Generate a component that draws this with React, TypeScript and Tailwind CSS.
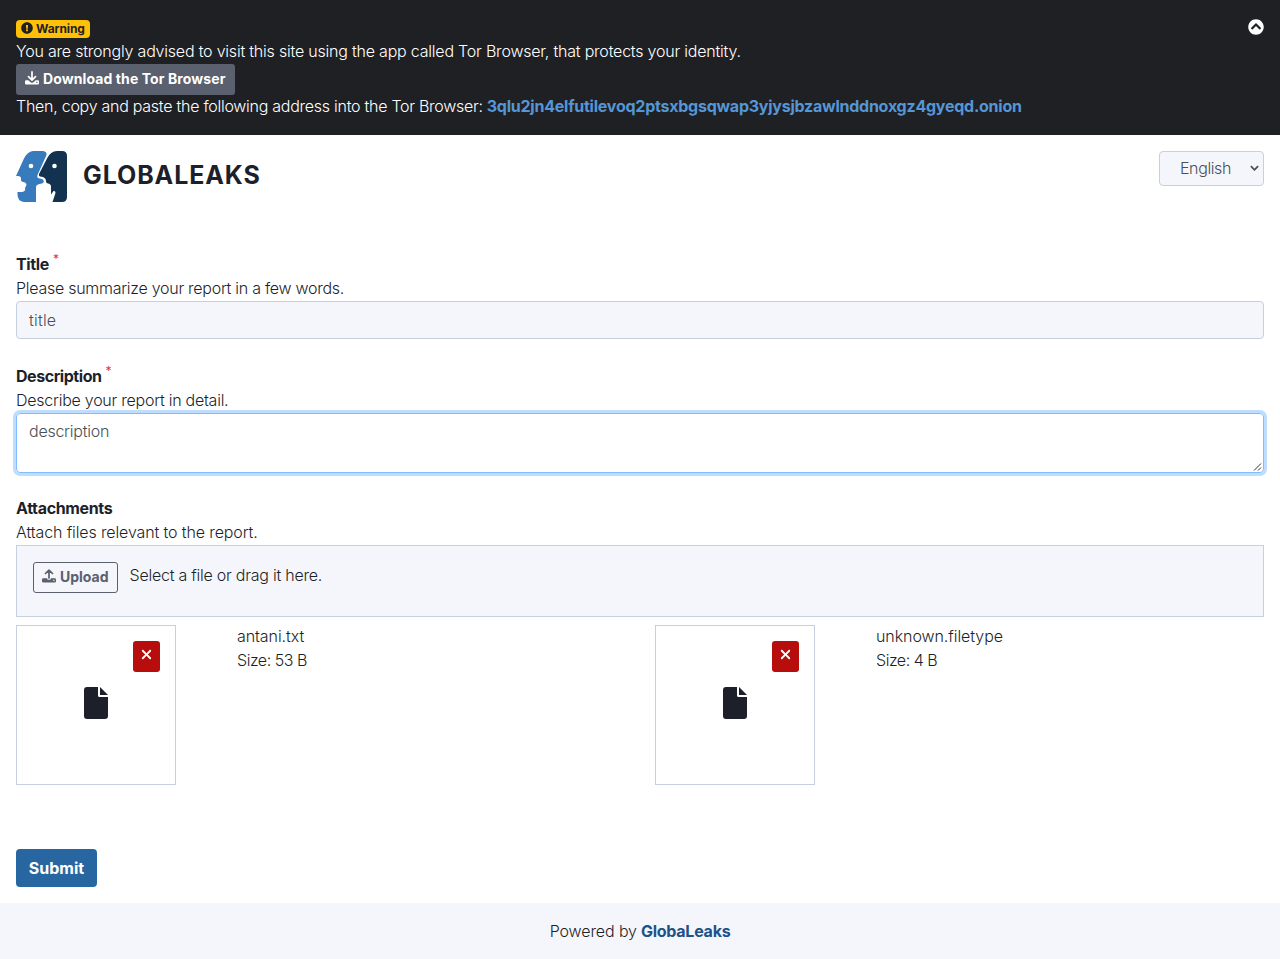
import type { ReactNode } from "react";
import { FaExclamationCircle, FaChevronCircleUp } from "react-icons/fa";
import { FaXmark } from "react-icons/fa6";

function Logo() {
  return (
    <svg viewBox="0 0 51 51" className="size-[51px]" aria-hidden="true">
      <path
        fill="#377bbc"
        d="M17 0H27Q31 0.500 30.500 4L21.500 24Q20.500 27.500 24 27.500L27 28.500L28 31L26 32.500Q20 33 20 36V51H8Q1.500 50.500 1.500 43V41H6Q10 40.500 9 37L10.500 34Q10 31 7 31Q4.500 30.500 5 27.500Q5 25 2 25H0L7.500 8.500Q11 0.500 17 0Z"
      />
      <path
        fill="#12324f"
        d="M41 0H46Q51 0 51 5V46Q51 51 46 51H36.500L39.500 42Q39.500 39.500 37.500 40L35 43.500V35Q34.500 32.500 30.500 32L29.500 28Q28 25.500 24 25.500Q22.500 25 23 23L31 7.500Q34.500 0 41 0Z"
      />
      <circle cx="15" cy="15" r="2.300" fill="#fff" />
      <circle cx="38.500" cy="15" r="2.300" fill="#fff" />
    </svg>
  );
}

function TrayIcon({ up }: { up?: boolean }) {
  return (
    <svg viewBox="0 0 14 14" className="size-[14px]" fill="none" aria-hidden="true">
      <path
        fill="currentColor"
        fillRule="evenodd"
        d={
          up
            ? "M1.300 9.200H5.200V9.700Q5.200 10.700 6.200 10.700H7.800Q8.800 10.700 8.800 9.700V9.200H12.700Q14 9.200 14 10.500V12.200Q14 13.500 12.700 13.500H1.300Q0 13.500 0 12.200V10.500Q0 9.200 1.300 9.200ZM11.300 10.700V12H12.500V10.700Z"
            : "M1.300 9.200H3.200L5.600 11.200Q7 12.200 8.400 11.200L10.800 9.200H12.700Q14 9.200 14 10.500V12.200Q14 13.500 12.700 13.500H1.300Q0 13.500 0 12.200V10.500Q0 9.200 1.300 9.200ZM11.300 10.700V12H12.500V10.700Z"
        }
      />
      <path
        stroke="currentColor"
        strokeWidth="1.700"
        strokeLinecap="round"
        strokeLinejoin="round"
        d={up ? "M7 9V1.200M3.500 4.500L7 1.100L10.500 4.500" : "M7 0.900V9M3.500 5.700L7 9.100L10.500 5.700"}
      />
    </svg>
  );
}

function FileIcon() {
  return (
    <svg viewBox="0 0 24 32" className="h-8 w-6" fill="currentColor" aria-hidden="true">
      <path d="M3 0H14V8.500Q14 10 15.500 10H24V29Q24 32 21 32H3Q0 32 0 29V3Q0 0 3 0ZM16 0L24 8H16Z" />
    </svg>
  );
}

function Field({ label, labelClass, hint, hintClass, required, children }: { label: string; labelClass: string; hint: string; hintClass: string; required?: boolean; children: ReactNode }) {
  return (
    <div>
      <div className="flex h-[25px] items-start font-bold leading-6">
        <span className={labelClass}>{label}</span>
        {required && <span className="ml-[4px] mt-[-5px] text-[12px] font-normal text-[#d9363e]">*</span>}
      </div>
      <div className="h-6 leading-[23px]"><span className={hintClass}>{hint}</span></div>
      {children}
    </div>
  );
}

const files = [
  { name: "antani.txt", size: "53 B" },
  { name: "unknown.filetype", size: "4 B" },
];

export default function App() {
  return (
    <div className="flex h-[959px] flex-col bg-white font-['Inter',sans-serif] text-[16px] font-light leading-6 text-[#1d1f2a]">
      <header className="flex h-[135px] items-start justify-between bg-[#1f2024] px-4 pt-4 text-white">
        <div className="flex flex-col items-start">
          <span className="mt-1 flex h-[18px] items-center gap-[3px] rounded bg-[#ffc107] px-[5px] text-[12px] font-bold text-[#1f2024]">
            <FaExclamationCircle className="mt-[-2px] size-3" />
            <span className="tracking-[-0.1px]">Warning</span>
          </span>
          <p className="mt-px h-[25px]"><span className="tracking-[-0.21px]">You are strongly advised to visit this site using the app called Tor Browser, that protects your identity.</span></p>
          <button className="flex h-[31px] items-start gap-1 rounded-[3px] bg-[#5a606d] px-[9px] pt-[3px] text-[14px] font-bold">
            <span className="mt-1"><TrayIcon /></span>
            <span className="tracking-[0.1px]">Download the Tor Browser</span>
          </button>
          <p className="mt-[-1px] flex gap-1">
            <span className="tracking-[-0.265px]">Then, copy and paste the following address into the Tor Browser:</span>
            <span className="font-bold tracking-[-0.24px] text-[#5596d6]">3qlu2jn4elfutilevoq2ptsxbgsqwap3yjysjbzawlnddnoxgz4gyeqd.onion</span>
          </p>
        </div>
        <FaChevronCircleUp className="mt-[3px] size-4" />
      </header>

      <main className="flex flex-1 flex-col px-4 pt-4">
        <div className="flex h-[51px] items-start justify-between">
          <div className="flex h-[51px] items-center gap-4">
            <Logo />
            <h1 className="mt-[-3px] text-[25px] font-bold"><span className="tracking-[0.9px]">GLOBALEAKS</span></h1>
          </div>
          <div className="flex h-[35px] w-[105px] items-center justify-between rounded-[4px] border border-[#c5d0e0] bg-[#f5f6fb] pl-5 pr-1 text-[#495057]">
            <span className="mt-[-2px] tracking-[-0.4px]">English</span>
            <svg viewBox="0 0 10 6" className="mt-[-1px] h-[6px] w-[9px]" fill="none" stroke="currentColor" strokeWidth="2">
              <path d="M1 1L5 5L9 1" />
            </svg>
          </div>
        </div>

        <div className="mt-[50px]">
          <Field label="Title" labelClass="tracking-[-0.35px]" hint="Please summarize your report in a few words." hintClass="tracking-[-0.27px]" required>
            <div className="flex h-[38px] items-center rounded-[4px] border border-[#c5d0e0] bg-[#f5f6fb] px-3 pb-px text-[#495057]"><span className="tracking-[0.2px]">title</span></div>
          </Field>
        </div>
        <div className="mt-[25px]">
          <Field label="Description" labelClass="tracking-[-0.45px]" hint="Describe your report in detail." hintClass="tracking-[-0.25px]" required>
            <div className="flex h-[60px] items-end justify-between rounded-[4px] border border-[#80bdff] pl-3 text-[#495057] shadow-[0_0_0_3px_#bfdeff]">
              <span className="self-start pt-[5px] tracking-[-0.25px]">description</span>
              <svg viewBox="0 0 10 10" className="size-[10px]" stroke="#333" strokeWidth="1">
                <path d="M1 8.500L8 1.500M5 8.500L8 5.500" />
              </svg>
            </div>
          </Field>
        </div>
        <div className="mt-[23px]">
          <Field label="Attachments" labelClass="tracking-[-0.35px]" hint="Attach files relevant to the report." hintClass="tracking-[-0.12px]">
            <div className="flex h-[72px] items-start gap-3 border border-[#c5d0e0] bg-[#f5f6fb] p-4">
              <button className="flex h-[31px] items-start gap-1 rounded-[3px] border border-[#5a606d] px-2 pt-[2px] text-[14px] font-bold text-[#5a606d]">
                <span className="mt-1"><TrayIcon up /></span>
                <span>Upload</span>
              </button>
              <span className="mt-[1px] tracking-[-0.24px]">Select a file or drag it here.</span>
            </div>
          </Field>
        </div>

        <div className="mt-2 grid grid-cols-2 gap-[30px]">
          {files.map((f) => (
            <div key={f.name} className="flex gap-[61px]">
              <div className="relative flex size-40 items-center justify-center border border-[#c5d0e0]">
                <span className="mt-[-4px]"><FileIcon /></span>
                <button className="absolute right-[15px] top-[15px] flex h-[31px] w-[27px] justify-center rounded-[3px] bg-[#b80d0d] pt-[6px] text-white">
                  <FaXmark className="size-[15px]" />
                </button>
              </div>
              <div className="mt-[-1px]">
                <p><span className="tracking-[-0.07px]">{f.name}</span></p>
                <p><span className="tracking-[-0.48px]">Size: {f.size}</span></p>
              </div>
            </div>
          ))}
        </div>

        <button className="mt-16 h-[38px] w-[81px] rounded-[4px] bg-[#2866a2] pb-px font-bold text-white">Submit</button>
      </main>

      <footer className="flex h-14 items-center justify-center gap-1 bg-[#f5f6fb]">
        <span className="tracking-[-0.1px]">Powered by</span>
        <span className="font-bold tracking-[-0.25px] text-[#1d5288]">GlobaLeaks</span>
      </footer>
    </div>
  );
}
